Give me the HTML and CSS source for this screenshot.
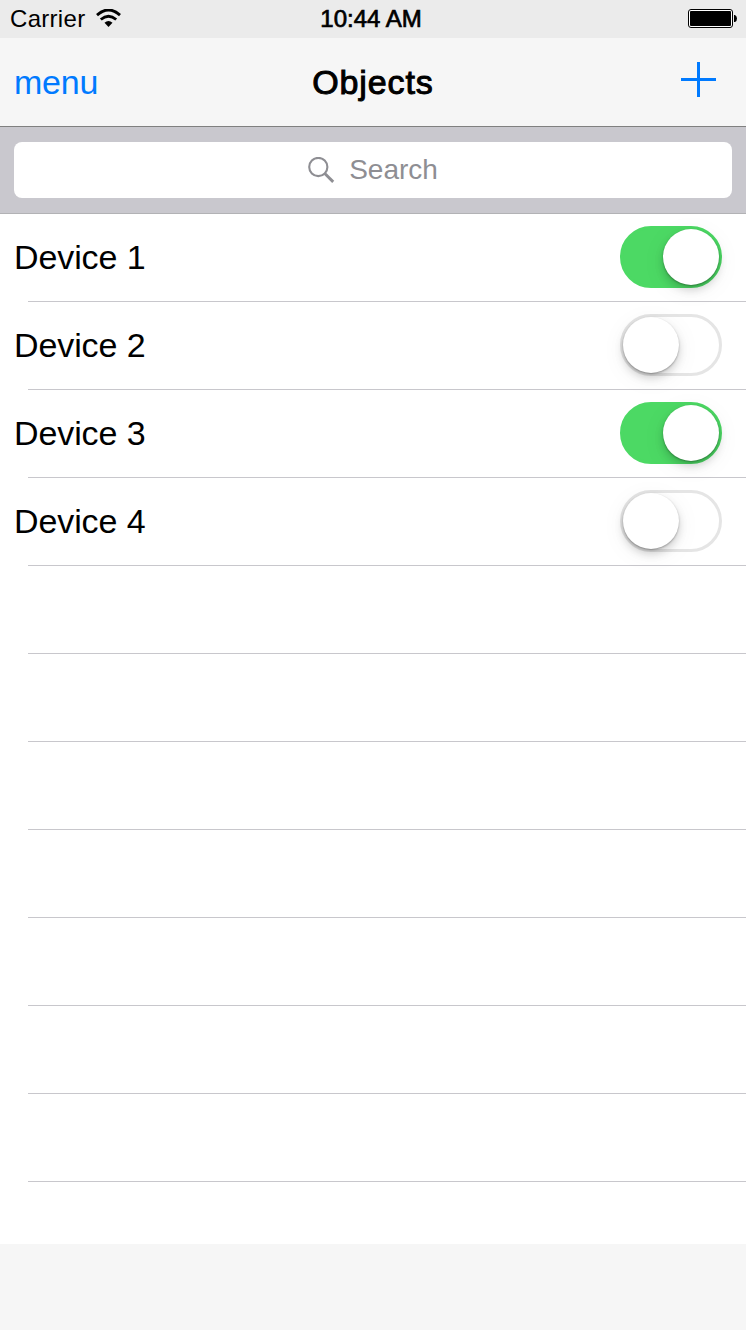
FILE: index.html
```html
<!DOCTYPE html>
<html lang="en">
<head>
<meta charset="utf-8">
<title>Objects</title>
<link rel="stylesheet" href="styles.css">
</head>
<body>
<div class="screen">
  <div class="status">
    <div class="carrier"><span>Carrier</span>
      <svg class="wifi" width="25" height="18" viewBox="0 0 25 18"><path d="M1 6.1Q12.5-4.1 24 6.1M4.8 10.5Q12.5 4.1 20.2 10.5" fill="none" stroke="#000" stroke-width="2.9"/><path d="M8.5 13.8Q12.5 10.2 16.5 13.8L12.5 17.9Z"/></svg>
    </div>
    <div class="time">10:44 AM</div>
    <svg class="battery" width="49" height="19" viewBox="0 0 49 19"><rect x=".5" y=".5" width="44" height="18" rx="2.5" fill="#fff" stroke="#000"/><rect x="2" y="2" width="41" height="15" rx="1"/><path d="M46 6h1q2 1 2 3.5T47 13h-1z"/></svg>
  </div>
  <header class="nav">
    <a class="menu">menu</a>
    <h1 class="title">Objects</h1>
    <svg class="add" width="35" height="35" viewBox="0 0 35 35"><path d="M16 0h3v35h-3zM0 16h35v3H0z" fill="#007aff"/></svg>
  </header>
  <div class="searchbar">
    <div class="search">
      <svg width="27" height="27" viewBox="0 0 27 27"><circle cx="10.3" cy="10" r="9.1" fill="none" stroke="#8e8e93" stroke-width="2.1"/><path d="M16.8 16.5l8.4 8.4" stroke="#8e8e93" stroke-width="2.9"/></svg>
      <span>Search</span>
    </div>
  </div>
  <ul class="list">
    <li class="row"><span>Device 1</span><i class="switch on"><b class="thumb"></b></i></li>
    <li class="row"><span>Device 2</span><i class="switch"><b class="thumb"></b></i></li>
    <li class="row"><span>Device 3</span><i class="switch on"><b class="thumb"></b></i></li>
    <li class="row"><span>Device 4</span><i class="switch"><b class="thumb"></b></i></li>
    <li class="row"></li>
    <li class="row"></li>
    <li class="row"></li>
    <li class="row"></li>
    <li class="row"></li>
    <li class="row"></li>
    <li class="row"></li>
  </ul>
  <footer class="toolbar"></footer>
</div>
</body>
</html>
```
FILE: styles.css
```css
* { box-sizing: border-box; }
body { margin: 0; background: #fff; color: #000; font-family: "Liberation Sans", Arial, sans-serif; }
svg { display: block; }
.screen { display: flex; flex-direction: column; width: 746px; height: 1330px; overflow: hidden; }
.status { display: grid; grid-template-columns: 1fr auto 1fr; align-items: center; height: 38px; padding: 0 9px 0 10px; background: #ebebeb; font-size: 24px; line-height: 38px; }
.carrier { display: flex; align-items: center; gap: 11px; letter-spacing: .3px; }
.wifi { margin-top: -2px; }
.time { margin-right: 5px; letter-spacing: 0; -webkit-text-stroke: .7px #000; }
.battery { justify-self: end; margin-top: -2px; }
.nav { display: grid; grid-template-columns: 1fr auto 1fr; align-items: center; height: 89px; padding: 0 30px 0 14px; background: #f6f6f6; border-bottom: 1px solid #808080; font-size: 34px; }
.menu { color: #007aff; letter-spacing: -.2px; }
.title { margin: 0 0 0 16px; font-size: 34px; font-weight: 400; letter-spacing: .9px; -webkit-text-stroke: 1px #000; }
.add { justify-self: end; margin-top: -5px; }
.searchbar { height: 87px; padding: 15px 14px; background: #c9c8ce; border-bottom: 1px solid #b2b2b5; }
.search { display: flex; align-items: center; justify-content: center; gap: 14px; height: 56px; border-radius: 8px; background: #fff; color: #8e8e93; font-size: 28px; }
.list { flex: 1; margin: 0; padding: 0; list-style: none; overflow: hidden; }
.row { display: flex; align-items: center; justify-content: space-between; height: 88px; padding: 0 24px 2px 14px; font-size: 34px; letter-spacing: -.1px; background: linear-gradient(#c8c7cc, #c8c7cc) 28px 87px / 100% 1px no-repeat; }
.switch { display: flex; width: 102px; height: 62px; padding: 0; border: 3px solid #e5e5e5; border-radius: 31px; background: #fff; }
.switch.on { justify-content: flex-end; border-color: #4cd964; background: #4cd964; }
.thumb { width: 56px; height: 56px; border-radius: 50%; background: #fff; box-shadow: 0 1px 2px rgba(0,0,0,.3), 0 5px 9px rgba(0,0,0,.17), 0 5px 26px rgba(0,0,0,.06); }
.toolbar { height: 86px; background: #f6f6f6; }
```
